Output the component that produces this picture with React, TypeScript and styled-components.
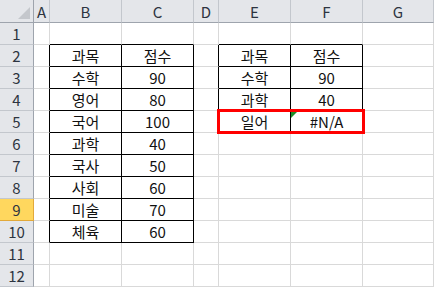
import React from 'react'
import styled, { createGlobalStyle } from 'styled-components'

const COLS = ['A', 'B', 'C', 'D', 'E', 'F', 'G']
const ROWS = 12
const SELECTED_ROW = 9

const values: Record<string, string> = {
  B2: '과목', C2: '점수',
  B3: '수학', C3: '90',
  B4: '영어', C4: '80',
  B5: '국어', C5: '100',
  B6: '과학', C6: '40',
  B7: '국사', C7: '50',
  B8: '사회', C8: '60',
  B9: '미술', C9: '70',
  B10: '체육', C10: '60',
  E2: '과목', F2: '점수',
  E3: '수학', F3: '90',
  E4: '과학', F4: '40',
  E5: '일어', F5: '#N/A',
}

// bordered ranges, columns by index (A = 1)
const tables = [
  { c1: 2, c2: 3, r1: 2, r2: 10 },
  { c1: 5, c2: 6, r1: 2, r2: 5 },
]

const rightEdge = (c: number, r: number) =>
  tables.some(t => r >= t.r1 && r <= t.r2 && c >= t.c1 - 1 && c <= t.c2)

const bottomEdge = (c: number, r: number) =>
  tables.some(t => c >= t.c1 && c <= t.c2 && r >= t.r1 - 1 && r <= t.r2)

const GlobalStyle = createGlobalStyle`
  html, body {
    margin: 0;
    padding: 0;
    background: #fff;
    overflow: hidden;
  }
  body {
    font-family: "Noto Sans CJK KR", "Noto Sans", sans-serif;
  }
`

const Sheet = styled.div`
  display: grid;
  grid-template-columns: 34px 16px 72px 72px 25px 72px 72px 1fr;
  grid-template-rows: 23px repeat(${ROWS}, 22px);
  width: 434px;
  height: 288px;
  overflow: hidden;
`

const Corner = styled.div`
  position: relative;
  background: #e4e6ea;
  border-right: 1px solid #9ea4ad;
  border-bottom: 1px solid #9ea4ad;

  &::after {
    content: '';
    position: absolute;
    right: 3px;
    bottom: 3px;
    border-style: solid;
    border-width: 0 0 12px 12px;
    border-color: transparent transparent #c4c7cc transparent;
  }
`

const ColHead = styled.div`
  display: flex;
  align-items: center;
  justify-content: center;
  background: #e4e6ea;
  border-right: 1px solid #c3c7cd;
  border-bottom: 1px solid #9ea4ad;
  color: #2d3440;
  font-size: 15px;
  line-height: 1;
`

const RowHead = styled.div<{ $selected?: boolean }>`
  display: flex;
  align-items: center;
  justify-content: center;
  background: ${p => (p.$selected ? '#ffd75e' : '#e4e6ea')};
  border-right: 1px solid ${p => (p.$selected ? '#e2a93a' : '#9ea4ad')};
  border-bottom: 1px solid ${p => (p.$selected ? '#e2a93a' : '#c3c7cd')};
  color: #2d3440;
  font-size: 15px;
  line-height: 1;
`

const Cell = styled.div<{ $right?: boolean; $bottom?: boolean }>`
  position: relative;
  display: flex;
  align-items: center;
  justify-content: center;
  border-right: 1px solid ${p => (p.$right ? '#000' : '#d9d9d9')};
  border-bottom: 1px solid ${p => (p.$bottom ? '#000' : '#d9d9d9')};
  color: #111;
  font-size: 15px;
  line-height: 1;
  white-space: nowrap;
`

const ErrorMark = styled.span`
  position: absolute;
  top: 1px;
  left: 0;
  border-style: solid;
  border-width: 6px 6px 0 0;
  border-color: #1e8c2a transparent transparent transparent;
`

// red frame drawn over two cells, anchored to the first one
const Highlight = styled.span<{ $span: number }>`
  position: absolute;
  left: -2px;
  top: -2px;
  width: ${p => p.$span * 72 + 4}px;
  height: 25px;
  box-sizing: border-box;
  border: 3px solid #f00;
  z-index: 2;
  pointer-events: none;
`

export default function App() {
  const cells: React.ReactNode[] = []

  cells.push(<Corner key="corner" />)
  COLS.forEach(c => cells.push(<ColHead key={c}>{c}</ColHead>))

  for (let r = 1; r <= ROWS; r++) {
    cells.push(
      <RowHead key={`h${r}`} $selected={r === SELECTED_ROW}>
        {r}
      </RowHead>
    )
    COLS.forEach((c, i) => {
      const ref = `${c}${r}`
      cells.push(
        <Cell key={ref} $right={rightEdge(i + 1, r)} $bottom={bottomEdge(i + 1, r)}>
          {ref === 'E5' && <Highlight $span={2} />}
          {ref === 'F5' && <ErrorMark />}
          {values[ref]}
        </Cell>
      )
    })
  }

  return (
    <>
      <GlobalStyle />
      <Sheet>{cells}</Sheet>
    </>
  )
}
